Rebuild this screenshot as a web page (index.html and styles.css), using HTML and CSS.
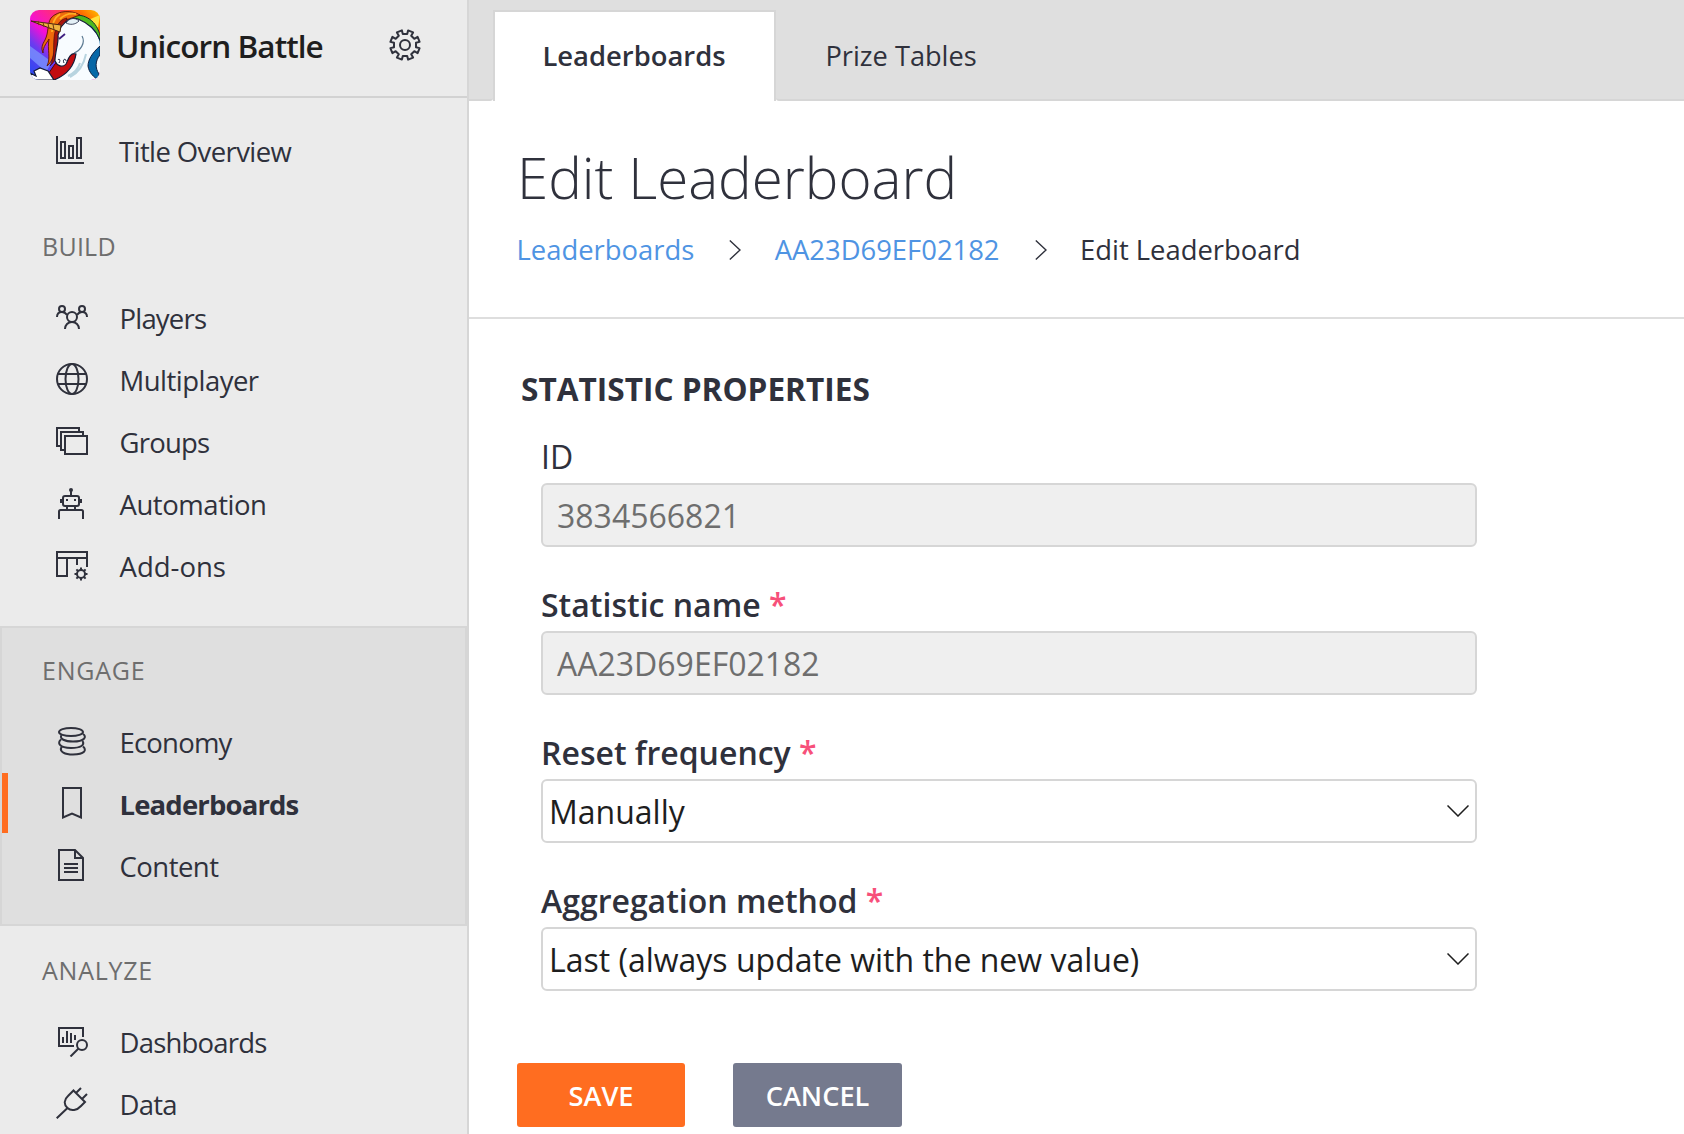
FILE: index.html
```html
<!DOCTYPE html>
<html lang="en">
<head>
<meta charset="utf-8">
<title>Edit Leaderboard</title>
<link rel="stylesheet" href="styles.css">
</head>
<body>
<div class="app">
  <aside class="sidebar">
    <header class="brand">
      <svg class="logo" viewBox="0 0 70 70">
        <defs>
          <linearGradient id="sky" x1="0" y1="1" x2="1" y2="0">
            <stop offset="0" stop-color="#1c4cf0"/>
            <stop offset=".28" stop-color="#6a3cf0"/>
            <stop offset=".44" stop-color="#f40fd6"/>
            <stop offset=".64" stop-color="#ff2a80"/>
            <stop offset=".84" stop-color="#ff6a00"/>
            <stop offset="1" stop-color="#ffc400"/>
          </linearGradient>
        </defs>
        <rect width="70" height="70" fill="url(#sky)"/>
        <path d="M0 36L22 52L16 62L0 48Z" fill="#7f9cff" opacity=".7"/>
        <path d="M70 5L58 10L68 18Z" fill="#ffe23c"/>
        <path d="M46 5C60 5 70 16 71 32L58 20L42 9Z" fill="#4fb81e" stroke="#14302a"/>
        <path d="M60 15C65 19 68 24 70 32L70 38C66 28 62 22 56 17Z" fill="#1478b4"/>
        <path d="M50 5C42 0 28 0 21 8C17 14 19 22 15 30C12 35 11 38 13 43C13 36 17 33 19 29C17 40 21 48 17 56C24 51 25 38 27 30L36 10Z" fill="#f06a0c" stroke="#5a1408" stroke-width=".9"/>
        <path d="M37 8C30 9 25 16 24 28C23 40 25 46 20 56C29 49 28 34 32 24Z" fill="#a8140c" stroke="#3c0a10" stroke-width=".6"/>
        <path d="M30 4C24 8 22 14 22 22M46 4C40 3 34 5 30 9" fill="none" stroke="#ffae22" stroke-width="1.8"/>
        <path d="M44 40L25 54L14 70H34L50 52Z" fill="#c20c10" stroke="#4a0810"/>
        <path d="M31 17C35 11 42 7 48 9C58 13 70 23 70 36V70H24C34 66 44 58 46 44C40 42 38 50 36 54C33 58 27 56 25 51C25 42 29 32 28 25Z" fill="#f8fcff"/>
        <path d="M24 70C34 66 44 58 46 44C40 42 38 50 36 54C33 58 27 56 25 51C25 42 29 32 28 25L31 17C35 11 42 7 48 9C58 13 66 20 70 30" fill="none" stroke="#141c38" stroke-width="1.2"/>
        <path d="M36 13C39 8 45 7 49 11C45 15 40 15 36 13Z" fill="#e4f0f6" stroke="#1c2440" stroke-width=".8"/>
        <path d="M29 29L35 24" stroke="#402080" stroke-width="1.8"/>
        <path d="M52 26C56 33 50 41 44 43" fill="none" stroke="#5a7890" stroke-width="1.2"/>
        <path d="M56 44C54 54 50 62 40 67M50 53C48 60 42 64 38 66" fill="none" stroke="#b8d4e0" stroke-width="2"/>
        <path d="M28 50C29 48 31 50 29 53M34 53C32 49 36 48 36 51" fill="none" stroke="#141c38"/>
        <path d="M1 11L31 15L30 22Z" fill="#f0b440" stroke="#4a2410"/>
        <path d="M8 11L9 15M13 12L14 17M18 13L19 19M23 14L24 20" stroke="#7a3c10" stroke-width="1.1"/>
        <path d="M70 36C62 43 58 50 58 56C59 63 64 67 68 70L69 64C65 58 65 51 70 45Z" fill="#0868a8" stroke="#102040"/>
        <path d="M0 63L6 66L4 61L10 58L18 61L24 70H0Z" fill="#fff" stroke="#141c38" stroke-width="1.2"/>
      </svg>
      <span class="brand-name">Unicorn Battle</span>
      <svg class="gear" viewBox="-16 -16 32 32">
        <path d="M-2.2-11L2.2-11L3.1-14.6L8.1-12.6L6.2-9.3L9.3-6.2L12.6-8.1L14.6-3.1L11-2.2L11 2.2L14.6 3.1L12.6 8.1L9.3 6.2L6.2 9.3L8.1 12.6L3.1 14.6L2.2 11L-2.2 11L-3.1 14.6L-8.1 12.6L-6.2 9.3L-9.3 6.2L-12.6 8.1L-14.6 3.1L-11 2.2L-11-2.2L-14.6-3.1L-12.6-8.1L-9.3-6.2L-6.2-9.3L-8.1-12.6L-3.1-14.6Z"/>
        <circle r="5"/>
      </svg>
    </header>

    <nav class="overview">
      <a class="item"><svg class="icon" viewBox="0 0 32 32"><path d="M1 2V29H28M5 8h4v16H5ZM13 12h4v12h-4ZM21 4h4v20h-4Z"/></svg><span class="label medium">Title Overview</span></a>
    </nav>

    <nav class="group">
      <h2 class="group-title">BUILD</h2>
      <a class="item"><svg class="icon" viewBox="0 0 32 32"><circle cx="6" cy="8" r="3"/><circle cx="26" cy="8" r="3"/><circle cx="16" cy="16" r="5"/><path d="M1 16C1 13 3 11 6 11S10 12.500 11 14M31 16C31 13 29 11 26 11S22 12.500 21 14M9 28C9 24 12 21 16 21S23 24 23 28"/></svg><span class="label tight">Players</span></a>
      <a class="item"><svg class="icon" viewBox="0 0 32 32"><circle cx="16" cy="16" r="15"/><ellipse cx="16" cy="16" rx="6.500" ry="15"/><path d="M2 11H30M2 21H30"/></svg><span class="label">Multiplayer</span></a>
      <a class="item"><svg class="icon" viewBox="0 0 32 32"><path d="M5 21H1V3H23V7M9 25H5V7H27V11M9 11H31V29H9Z"/></svg><span class="label tight">Groups</span></a>
      <a class="item"><svg class="icon" viewBox="0 0 32 32"><circle class="solid" cx="15" cy="3" r="2"/><path d="M15 3V9M5 12V16M25 12V16M11 19V23M19 19V23M3 32V24.500Q3 23 4.500 23H25.500Q27 23 27 24.500V32"/><rect x="7" y="9" width="16" height="10" rx="2"/><path class="solid" d="M10 12h2v2h-2ZM18 12h2v2h-2Z"/></svg><span class="label loose">Automation</span></a>
      <a class="item"><svg class="icon" viewBox="0 0 32 32"><path d="M12 27H1V3H31V18M1 9H31M11 9V27M21 9V16"/><circle cx="25" cy="25" r="4"/><path d="M25 18.500V21M25 29V31.500M18.500 25H21M29 25H31.500M20.400 20.400L22 22M28 28L29.600 29.600M20.400 29.600L22 28M28 22L29.600 20.400"/></svg><span class="label wide">Add-ons</span></a>
    </nav>

    <nav class="group active">
      <h2 class="group-title spaced">ENGAGE</h2>
      <a class="item"><svg class="icon" viewBox="0 0 32 32"><ellipse cx="15" cy="7" rx="12" ry="4"/><path d="M27 9C31 11.500 29 16.500 17 16.500C9 16.500 3 14 5.500 10M5 14.500C1 17.500 3 23 15 23C25 23 29 20 26.500 16M5.500 22C3 27 9 29.500 17 29.500C29 29.500 31 25 27 21.500"/></svg><span class="label tight">Economy</span></a>
      <a class="item current"><svg class="icon" viewBox="0 0 32 32"><path d="M7 1H25V30.500L16 26.500L7 30.500Z"/></svg><span class="label">Leaderboards</span></a>
      <a class="item"><svg class="icon" viewBox="0 0 32 32"><path d="M3 1H19L27 9V31H3ZM19 1V9H27M8 15H22M8 19H22M8 23H22"/></svg><span class="label">Content</span></a>
    </nav>

    <nav class="group">
      <h2 class="group-title spaced">ANALYZE</h2>
      <a class="item"><svg class="icon" viewBox="0 0 32 32"><path d="M18 21H3V3H27V12M7 12V18M11 6V18M15 8V18M19 10V15"/><circle cx="26" cy="20" r="5"/><path d="M22.500 23.500L14.500 31.500"/></svg><span class="label tight">Dashboards</span></a>
      <a class="item"><svg class="icon" viewBox="0 0 32 32"><path d="M.7 31.300L11.500 21M17.500 3.500L29 15L25 19C21 23.500 15 24.500 11.500 21C7.500 17.500 8 12.500 12 9ZM20 6L25 1M26 12L31 7"/></svg><span class="label tight">Data</span></a>
    </nav>
  </aside>

  <main class="main">
    <div class="tabs">
      <div class="tab-lead"></div>
      <a class="tab selected">Leaderboards</a>
      <a class="tab other">Prize Tables</a>
    </div>

    <header class="page-head">
      <h1 class="page-title">Edit Leaderboard</h1>
      <div class="crumbs">
        <a class="link">Leaderboards</a>
        <svg class="chev" viewBox="0 0 12 20"><path d="M.8.5L11 10L.8 19.500"/></svg>
        <a class="link">AA23D69EF02182</a>
        <svg class="chev" viewBox="0 0 12 20"><path d="M.8.5L11 10L.8 19.500"/></svg>
        <span>Edit Leaderboard</span>
      </div>
    </header>

    <form class="form">
      <h2 class="form-title">STATISTIC PROPERTIES</h2>
      <div class="field">
        <div class="field-label plain">ID</div>
        <div class="box disabled">3834566821</div>
      </div>
      <div class="field">
        <div class="field-label">Statistic name <span class="req">*</span></div>
        <div class="box disabled">AA23D69EF02182</div>
      </div>
      <div class="field">
        <div class="field-label">Reset frequency <span class="req">*</span></div>
        <div class="box select"><span>Manually</span><svg class="caret" viewBox="0 0 22 12"><path d="M.5.5L11 11L21.500.5"/></svg></div>
      </div>
      <div class="field">
        <div class="field-label">Aggregation method <span class="req">*</span></div>
        <div class="box select"><span>Last (always update with the new value)</span><svg class="caret" viewBox="0 0 22 12"><path d="M.5.5L11 11L21.500.5"/></svg></div>
      </div>
      <div class="actions">
        <div class="btn save">SAVE</div>
        <div class="btn cancel">CANCEL</div>
      </div>
    </form>
  </main>
</div>
</body>
</html>
```
FILE: styles.css
```css
* { box-sizing: border-box; }

body {
  margin: 0;
  background: #fff;
  color: #2f313c;
  font-family: "Open Sans", "Noto Sans", sans-serif;
}

.app {
  display: flex;
  height: 1134px;
  overflow: hidden;
}

/* Sidebar */
.sidebar {
  flex: none;
  width: 469px;
  background: #ebebeb;
  border-right: 2px solid #d6d6d6;
}

.brand {
  display: flex;
  align-items: center;
  height: 98px;
  padding: 0 46px 6px 30px;
  border-bottom: 2px solid #d2d2d2;
}

.logo {
  width: 70px;
  height: 70px;
  border-radius: 9px;
}

.brand-name {
  flex: 1;
  margin: 2px 0 0 16px;
  color: #1e1e1e;
  font-size: 31.5px;
  font-weight: 600;
  letter-spacing: -.92px;
  line-height: 44px;
}

.gear {
  width: 32px;
  height: 32px;
  fill: none;
  stroke: #2f313c;
  stroke-width: 2;
  stroke-linejoin: round;
}

.overview { padding: 21px 0; }

.item {
  display: flex;
  align-items: center;
  height: 62px;
  padding-left: 56px;
}

.icon {
  width: 32px;
  height: 32px;
  fill: none;
  stroke: #2f313c;
  stroke-width: 2;
}

.icon .solid {
  fill: #2f313c;
  stroke: none;
}

.label {
  padding-top: 4px;
  margin-left: 31.5px;
  font-size: 27.5px;
  letter-spacing: -.52px;
  line-height: 40px;
}

.label.medium {
  margin-left: 31px;
  letter-spacing: -.6px;
}

.label.tight { letter-spacing: -.8px; }
.label.loose { letter-spacing: -.45px; }
.label.wide { letter-spacing: 0; }

.group {
  padding: 26px 0 30px;
}

.group.active {
  padding: 24px 0 28px;
  background: #dfdfdf;
  border: 2px solid #d6d6d6;
}

.group-title {
  margin: 0 0 22px;
  padding-left: 42px;
  color: #6e6e6e;
  font-size: 25px;
  font-weight: 400;
  letter-spacing: .25px;
  line-height: 36px;
}

.active .group-title { padding-left: 40px; }
.group-title.spaced { letter-spacing: .75px; }
.active .item { padding-left: 54px; }

.active .item.current {
  height: 60px;
  margin: 1px 0;
  padding-left: 48px;
  border-left: 6px solid #ff6d20;
}

.current .label {
  font-weight: 700;
  letter-spacing: -.85px;
}

/* Main column */
.main {
  flex: 1;
  min-width: 0;
}

.tabs {
  display: flex;
  height: 101px;
  padding-top: 10px;
  background: linear-gradient(#dfdfdf 90px, #fff 90px);
}

.tab-lead,
.tab.other {
  margin-top: -10px;
  background: #dfdfdf;
  border-bottom: 2px solid #d6d6d6;
}

.tab-lead {
  width: 24px;
  border-bottom-right-radius: 3px;
}

.tab {
  font-size: 27.4px;
  line-height: 40px;
}

.tab.selected {
  width: 283px;
  padding: 24px 1px 0 0;
  background: #fff;
  border: 2px solid #d6d6d6;
  border-bottom: 0;
  font-weight: 600;
  text-align: center;
}

.tab.other {
  flex: 1;
  padding: 36px 0 0 49.5px;
  border-bottom-left-radius: 3px;
  font-size: 27.2px;
}

.page-head {
  height: 218px;
  padding: 38px 0 0 48px;
  border-bottom: 2px solid #dedede;
}

.page-title {
  margin: 0;
  font-size: 56.5px;
  font-weight: 300;
  line-height: 78px;
}

.crumbs {
  display: flex;
  align-items: center;
  margin: 13px 0 0 -.5px;
  font-size: 27.4px;
  line-height: 40px;
}

.link { color: #4f94e3; }

.chev {
  width: 12px;
  height: 20px;
  margin: 0 33.5px 0 35px;
  fill: none;
  stroke: #2f313c;
  stroke-width: 1.4;
}

.form { padding: 48px 0 0 48px; }

.form-title {
  margin: 0 0 25px 4px;
  font-size: 31.6px;
  font-weight: 700;
  line-height: 44px;
}

.field {
  width: 936px;
  margin: 0 0 37px 24px;
}

.field-label {
  height: 47px;
  font-size: 32px;
  font-weight: 600;
  line-height: 42px;
}

.field-label.plain { font-weight: 400; }
.req { color: #f7507a; }

.box {
  display: flex;
  align-items: center;
  height: 64px;
  padding: 0 14px;
  border: 2px solid #d6d6d6;
  border-radius: 6px;
  font-size: 32px;
}

.box.disabled {
  background: #efefef;
  color: #6e6e6e;
}

.box.select {
  justify-content: space-between;
  padding: 0 6px 0 6px;
  color: #1e1e1e;
}

.caret {
  width: 22px;
  height: 12px;
  fill: none;
  stroke: #1e1e1e;
  stroke-width: 1.5;
}

.actions {
  display: flex;
  gap: 48px;
  margin-top: 72px;
}

.btn {
  height: 64px;
  border-radius: 3px;
  color: #fff;
  font-size: 27.2px;
  font-weight: 600;
  line-height: 66px;
  text-align: center;
}

.save {
  width: 168px;
  background: #ff6d20;
}

.cancel {
  width: 169px;
  background: #757a8e;
}
```
